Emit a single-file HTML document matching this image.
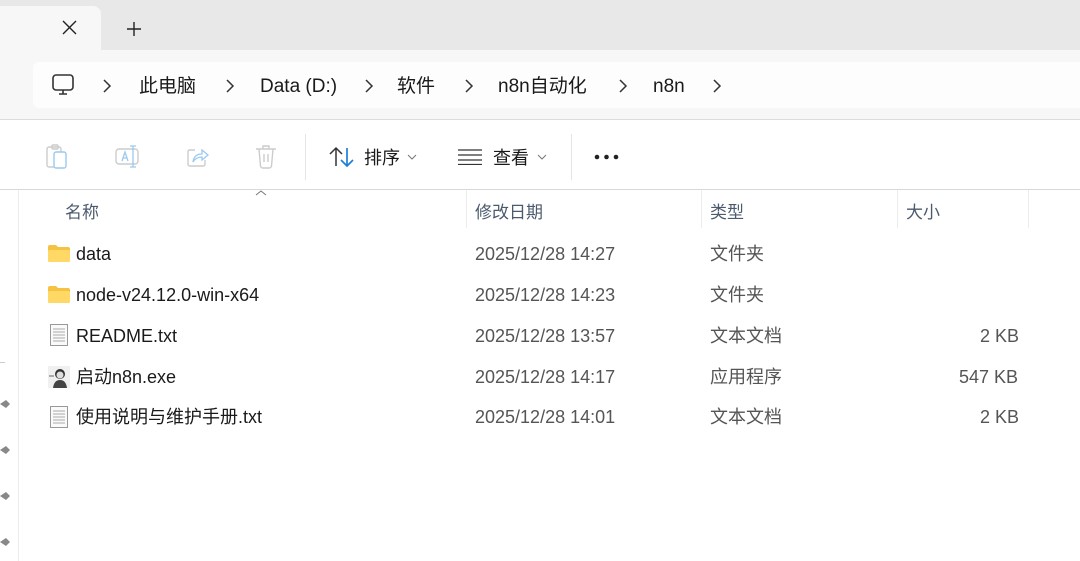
<!DOCTYPE html>
<html><head><meta charset="utf-8"><style>
*{margin:0;padding:0;box-sizing:border-box}
body{width:1080px;height:561px;overflow:hidden;background:#fff;font-family:"Liberation Sans","Noto Sans CJK SC",sans-serif;position:relative;color:#1a1a1a}
.abs{position:absolute}
.t{white-space:nowrap}
</style></head><body>
<div class="abs" style="left:0;top:0;width:1080px;height:50px;background:#e8e8e8"></div>
<div class="abs" style="left:-10px;top:6px;width:111px;height:50px;background:#f7f7f7;border-radius:8px 8px 0 0"></div>
<svg class="abs" style="left:62px;top:20px" width="15" height="15"><path d="M1 1L14 14M14 1L1 14" stroke="#222" stroke-width="1.4"/></svg>
<svg class="abs" style="left:126px;top:21px" width="16" height="16"><path d="M8 1V15M1 8H15" stroke="#222" stroke-width="1.4"/></svg>
<div class="abs" style="left:0;top:50px;width:1080px;height:70px;background:#f7f7f7;border-bottom:1px solid #dcdcdc"></div>
<div class="abs" style="left:33px;top:62px;width:1060px;height:46px;background:#fdfdfd;border-radius:6px"></div>
<svg class="abs" style="left:51px;top:73px" width="24" height="24"><rect x="2" y="2" width="20" height="15" rx="3" fill="none" stroke="#333" stroke-width="1.6"/><path d="M8 21H16M12 17V21" stroke="#333" stroke-width="1.6"/></svg>
<svg class="abs" style="left:0;top:78px" width="740" height="16">
<g fill="none" stroke="#333" stroke-width="1.5"><path d="M104 2L110 8L104 14"/><path d="M227 2L233 8L227 14"/><path d="M366 2L372 8L366 14"/><path d="M466 2L472 8L466 14"/><path d="M620 2L626 8L620 14"/><path d="M714 2L720 8L714 14"/></g></svg>
<div class="abs t" style="top:75px;left:0;font-size:19px;line-height:24px">
<span class="abs" style="left:139px">此电脑</span>
<span class="abs" style="left:260px">Data (D:)</span>
<span class="abs" style="left:397px">软件</span>
<span class="abs" style="left:498px">n8n自动化</span>
<span class="abs" style="left:653px">n8n</span>
</div>
<!-- toolbar -->
<svg class="abs" style="left:45px;top:144px" width="26" height="26"><rect x="2" y="3" width="14" height="20" rx="2" fill="none" stroke="#ccc" stroke-width="1.4"/><rect x="7" y="1" width="6" height="4" rx="1" fill="none" stroke="#ccc" stroke-width="1.4"/><rect x="9" y="8" width="12" height="16" rx="2" fill="#fff" stroke="#9cc9f0" stroke-width="1.4"/></svg>
<svg class="abs" style="left:114px;top:144px" width="28" height="26"><rect x="2" y="5" width="22" height="15" rx="3" fill="none" stroke="#ccc" stroke-width="1.4"/><path d="M8 17L11 8L14 17M9 14H13" fill="none" stroke="#9cc9f0" stroke-width="1.3"/><path d="M16 2H22M19 2V23M16 23H22" stroke="#9cc9f0" stroke-width="1.3" fill="none"/></svg>
<svg class="abs" style="left:185px;top:144px" width="26" height="26"><path d="M10 6H5Q3 6 3 8V20Q3 22 5 22H18Q20 22 20 20V16" fill="none" stroke="#ccc" stroke-width="1.4"/><path d="M8 18Q9 10 17 10V6L23 11L17 16V13Q11 13 8 18Z" fill="none" stroke="#9cc9f0" stroke-width="1.3"/></svg>
<svg class="abs" style="left:254px;top:144px" width="26" height="26"><path d="M2 5H22M9 5V2H15V5M5 5L6.5 22Q7 24 9 24H15Q17 24 17.5 22L19 5M10 10V18M14 10V18" fill="none" stroke="#ccc" stroke-width="1.4"/></svg>
<div class="abs" style="left:305px;top:134px;width:1px;height:46px;background:#e5e5e5"></div>
<div class="abs" style="left:571px;top:134px;width:1px;height:46px;background:#e5e5e5"></div>
<svg class="abs" style="left:329px;top:146px" width="26" height="22"><path d="M7 20V2M1 8L7 2L13 8" fill="none" stroke="#333" stroke-width="1.5"/><path d="M18 2V20M12 14L18 20L24 14" fill="none" stroke="#1e7fd6" stroke-width="1.7"/></svg>
<div class="abs t" style="left:364px;top:144px;font-size:18px">排序</div>
<svg class="abs" style="left:407px;top:154px" width="10" height="6"><path d="M1 1L5 5L9 1" fill="none" stroke="#777" stroke-width="1"/></svg>
<svg class="abs" style="left:458px;top:149px" width="24" height="16"><path d="M0 1H24M0 6H24M0 11H24M0 15.5H24" stroke="#333" stroke-width="1.3"/></svg>
<div class="abs t" style="left:493px;top:144px;font-size:18px">查看</div>
<svg class="abs" style="left:537px;top:154px" width="10" height="6"><path d="M1 1L5 5L9 1" fill="none" stroke="#777" stroke-width="1"/></svg>
<svg class="abs" style="left:594px;top:153px" width="26" height="8"><circle cx="3" cy="4" r="2.3" fill="#222"/><circle cx="12.5" cy="4" r="2.3" fill="#222"/><circle cx="22" cy="4" r="2.3" fill="#222"/></svg>
<div class="abs" style="left:0;top:189px;width:1080px;height:1px;background:#d8d8d8"></div>
<!-- left pane -->
<div class="abs" style="left:18px;top:190px;width:1px;height:371px;background:#ececec"></div>
<div class="abs" style="left:0;top:362px;width:5px;height:1px;background:#ccc"></div>
<svg class="abs" style="left:0;top:398px" width="12" height="160"><g fill="#888"><path d="M0 6L6 2L10 6L6 10Z"/><path d="M0 52L6 48L10 52L6 56Z"/><path d="M0 98L6 94L10 98L6 102Z"/><path d="M0 144L6 140L10 144L6 148Z"/></g></svg>
<!-- headers -->
<svg class="abs" style="left:255px;top:190px" width="12" height="6"><path d="M1 5L6 1L11 5" fill="none" stroke="#777" stroke-width="1"/></svg>
<div class="abs" style="left:466px;top:190px;width:1px;height:38px;background:#ececec"></div>
<div class="abs" style="left:701px;top:190px;width:1px;height:38px;background:#ececec"></div>
<div class="abs" style="left:897px;top:190px;width:1px;height:38px;background:#ececec"></div>
<div class="abs" style="left:1028px;top:190px;width:1px;height:38px;background:#ececec"></div>
<div class="abs t" style="top:198px;left:0;font-size:17px;color:#4c5a6e">
<span class="abs" style="left:65px">名称</span><span class="abs" style="left:475px">修改日期</span><span class="abs" style="left:710px">类型</span><span class="abs" style="left:906px">大小</span></div>
<!-- rows -->
<div class="abs t" style="left:0;top:243px;font-size:18px;line-height:22px">
<div class="abs" style="top:0"><span class="abs" style="left:76px">data</span><span class="abs" style="left:475px;color:#555">2025/12/28 14:27</span><span class="abs" style="left:710px;color:#555">文件夹</span></div>
<div class="abs" style="top:41px"><span class="abs" style="left:76px">node-v24.12.0-win-x64</span><span class="abs" style="left:475px;color:#555">2025/12/28 14:23</span><span class="abs" style="left:710px;color:#555">文件夹</span></div>
<div class="abs" style="top:82px"><span class="abs" style="left:76px">README.txt</span><span class="abs" style="left:475px;color:#555">2025/12/28 13:57</span><span class="abs" style="left:710px;color:#555">文本文档</span><span class="abs" style="left:980px;color:#555">2 KB</span></div>
<div class="abs" style="top:123px"><span class="abs" style="left:76px">启动n8n.exe</span><span class="abs" style="left:475px;color:#555">2025/12/28 14:17</span><span class="abs" style="left:710px;color:#555">应用程序</span><span class="abs" style="left:959px;color:#555">547 KB</span></div>
<div class="abs" style="top:163px"><span class="abs" style="left:76px">使用说明与维护手册.txt</span><span class="abs" style="left:475px;color:#555">2025/12/28 14:01</span><span class="abs" style="left:710px;color:#555">文本文档</span><span class="abs" style="left:980px;color:#555">2 KB</span></div>
</div>
<!-- icons -->
<svg class="abs" style="left:48px;top:245px" width="22" height="17"><path d="M0 2Q0 0 2 0H8L10 2H20Q22 2 22 4V15Q22 17 20 17H2Q0 17 0 15Z" fill="#f5c242"/><rect x="0" y="5" width="22" height="12" rx="1.5" fill="#ffd865"/></svg>
<svg class="abs" style="left:48px;top:286px" width="22" height="17"><path d="M0 2Q0 0 2 0H8L10 2H20Q22 2 22 4V15Q22 17 20 17H2Q0 17 0 15Z" fill="#f5c242"/><rect x="0" y="5" width="22" height="12" rx="1.5" fill="#ffd865"/></svg>
<svg class="abs" style="left:50px;top:324px" width="18" height="22"><path d="M0.5 0.5H17.5V21.5H0.5Z" fill="#fafafa" stroke="#999"/><path d="M3 5H15M3 8H15M3 11H15M3 14H15M3 17H15" stroke="#aaa"/></svg>
<svg class="abs" style="left:48px;top:366px" width="22" height="22"><rect width="22" height="22" fill="#f0f0f0"/><circle cx="12" cy="8" r="5" fill="#333"/><circle cx="12" cy="9" r="3.5" fill="#ddd"/><path d="M5 22Q6 14 12 14Q18 14 19 22Z" fill="#444"/><path d="M1 10H6" stroke="#666"/></svg>
<svg class="abs" style="left:50px;top:406px" width="18" height="22"><path d="M0.5 0.5H17.5V21.5H0.5Z" fill="#fafafa" stroke="#999"/><path d="M3 5H15M3 8H15M3 11H15M3 14H15M3 17H15" stroke="#aaa"/></svg>
</body></html>
